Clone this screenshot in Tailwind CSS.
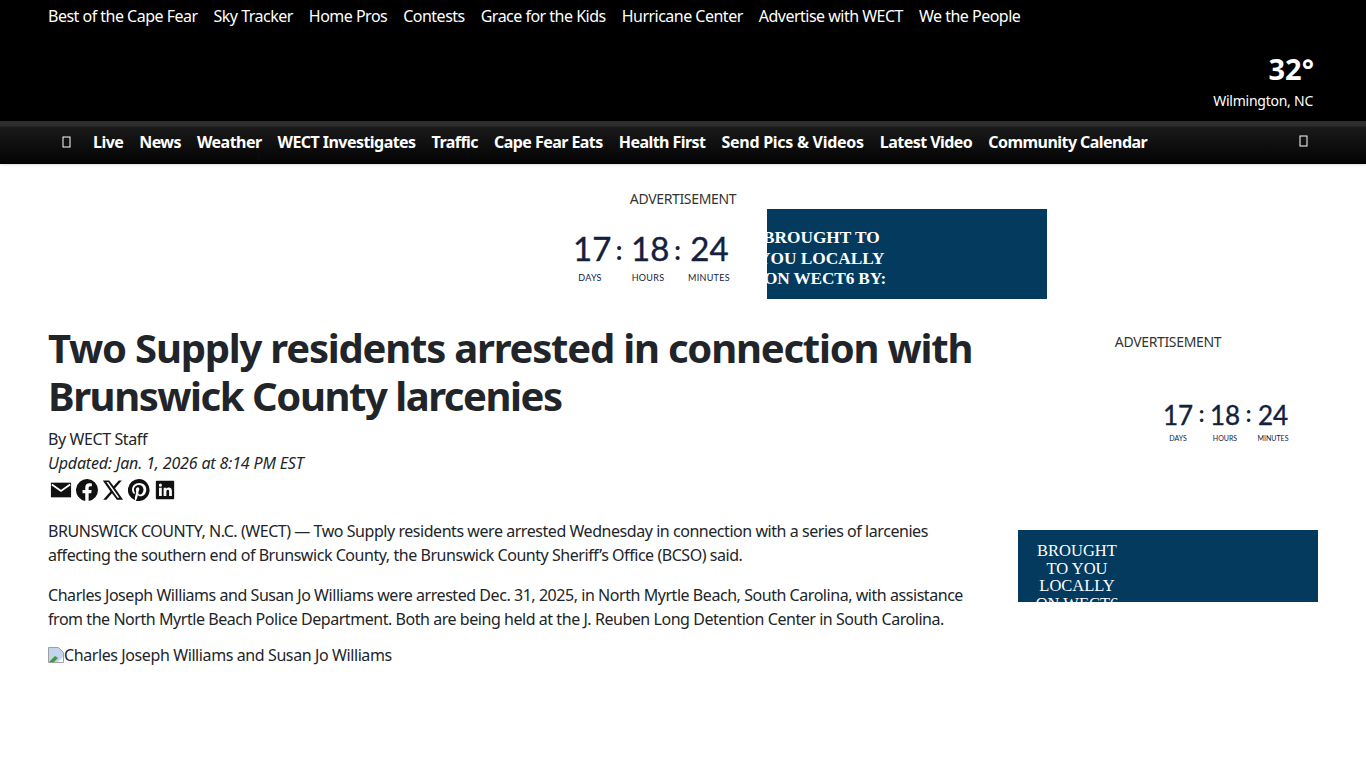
<!DOCTYPE html>
<html lang="en">
<head>
<meta charset="utf-8">
<title>Two Supply residents arrested in connection with Brunswick County larcenies</title>
<script src="https://cdn.jsdelivr.net/npm/@tailwindcss/browser@4"></script>
</head>
<body class="bg-white text-[#212529] font-['Noto_Sans',sans-serif] overflow-hidden h-[768px]">

  <!-- top bar -->
  <header class="bg-black h-[121px] px-[48px] text-white flex flex-col">
    <nav class="flex gap-[16px] text-[16px] leading-[24px] pt-[4px] tracking-[-0.51px]">
      <a>Best of the Cape Fear</a>
      <a>Sky Tracker</a>
      <a>Home Pros</a>
      <a>Contests</a>
      <a>Grace for the Kids</a>
      <a>Hurricane Center</a>
      <a>Advertise with WECT</a>
      <a>We the People</a>
    </nav>
    <div class="mt-[20px] text-right">
      <div class="text-[29px] leading-[42px] font-bold pr-[4px]">32°</div>
      <div class="text-[14px] leading-[21px] pr-[5px] tracking-[-0.25px]">Wilmington, NC</div>
    </div>
  </header>

  <!-- main nav -->
  <nav class="h-[43px] bg-[linear-gradient(#2e2e2e_0,#2e2e2e_5px,#1a1a1a_6px,#030303_100%)] text-white flex items-center pl-[62px] pr-[58px] pb-[2px] text-[16px] font-bold tracking-[-0.55px] shadow-sm">
    <svg class="w-[9px] h-[12px] mr-[22px]" viewBox="0 0 9 12"><rect x="1" y="1" width="7" height="10" fill="none" stroke="white" stroke-width="1"/></svg>
    <div class="flex gap-[16px]">
      <a>Live</a>
      <a>News</a>
      <a>Weather</a>
      <a>WECT Investigates</a>
      <a>Traffic</a>
      <a>Cape Fear Eats</a>
      <a>Health First</a>
      <a class="tracking-[-0.27px]">Send Pics &amp; Videos</a>
      <a>Latest Video</a>
      <a>Community Calendar</a>
    </div>
    <svg class="w-[9px] h-[12px] ml-auto mb-[2px]" viewBox="0 0 9 12"><rect x="1" y="1" width="7" height="10" fill="none" stroke="white" stroke-width="1"/></svg>
  </nav>

  <!-- leaderboard ad -->
  <section class="flex flex-col items-center pt-[24px] h-[155px]">
    <div class="text-[14px] leading-[21px] tracking-[-0.35px] text-[#333]">ADVERTISEMENT</div>
    <div class="flex justify-end w-[728px] h-[90px]">
      <div class="w-[200px] shrink-0 text-[#14213d] font-['Lato',sans-serif]">
        <div class="flex items-start pt-[19px]">
          <div class="w-[34px] text-center text-[33px] leading-[40px] [-webkit-text-stroke:0.4px_#14213d]">17</div>
          <div class="w-[24px] text-center text-[26px] leading-[44px] font-bold">:</div>
          <div class="w-[34px] text-center text-[33px] leading-[40px] [-webkit-text-stroke:0.4px_#14213d]">18</div>
          <div class="w-[25px] text-center text-[26px] leading-[44px] font-bold">:</div>
          <div class="w-[39px] text-center text-[33px] leading-[40px] [-webkit-text-stroke:0.4px_#14213d]">24</div>
        </div>
        <div class="flex text-[9px] leading-[12px] tracking-[0.3px]">
          <div class="w-[34px] text-center">DAYS</div>
          <div class="w-[24px]"></div>
          <div class="w-[34px] text-center">HOURS</div>
          <div class="w-[25px]"></div>
          <div class="w-[39px] -ml-[2px] text-center whitespace-nowrap">MINUTES</div>
        </div>
      </div>
      <div class="w-[280px] h-[90px] bg-[#033a5e] overflow-hidden shrink-0 ml-[-6px] text-white font-['Liberation_Serif',serif] font-bold text-[17.300px] leading-[20.500px] pt-[19px] whitespace-nowrap">
        <div class="-ml-[4px]">BROUGHT TO</div>
        <div class="-ml-[9px]">YOU LOCALLY</div>
        <div class="-ml-[3px] tracking-[-0.15px]">ON WECT6 BY:</div>
      </div>
    </div>
  </section>

  <!-- article -->
  <main class="flex pl-[48px] pr-[48px]">
    <article class="w-[930px] shrink-0">
      <h1 class="text-[40px] leading-[48px] font-bold pt-[5px] tracking-[-1.210px]">Two Supply residents arrested in connection with <span class="tracking-[-1.450px]">Brunswick County larcenies</span></h1>
      <div class="text-[16px] leading-[24px] mt-[7px] tracking-[-0.4px]">By WECT Staff</div>
      <div class="text-[16px] leading-[24px] italic tracking-[-0.15px]">Updated: Jan. 1, 2026 at 8:14 PM EST</div>
      <div class="flex gap-[4px] items-center mt-[3px] ml-[2px] h-[24px]">
        <svg class="w-[22px] h-[22px]" viewBox="0 0 24 24"><path fill="#111" d="M1 4h22v16H1z"/><path fill="none" stroke="#fff" stroke-width="2" d="M2 6l10 7 10-7"/></svg>
        <svg class="w-[22px] h-[22px]" viewBox="0 0 24 24"><path fill="#111" d="M24 12a12 12 0 1 0-13.900 11.900v-8.400H7.100V12h3V9.400c0-3 1.800-4.700 4.500-4.700 1.300 0 2.700.2 2.700.2v3h-1.500c-1.500 0-2 .9-2 1.900V12h3.300l-.5 3.500h-2.800v8.400A12 12 0 0 0 24 12z"/></svg>
        <svg class="w-[22px] h-[22px]" viewBox="0 0 24 24"><path fill="#111" d="M18.200 1.500h3.400l-7.400 8.500L23 22.500h-6.800l-5.300-7-6.100 7H1.300l7.900-9L.9 1.500h7l4.800 6.400zm-1.200 19h1.900L6.800 3.400H4.800z"/></svg>
        <svg class="w-[22px] h-[22px]" viewBox="0 0 24 24"><path fill="#111" d="M12 0a12 12 0 0 0-4.400 23.200c-.1-1-.2-2.400 0-3.400l1.400-6s-.4-.7-.4-1.800c0-1.700 1-2.900 2.200-2.900 1 0 1.500.8 1.500 1.700 0 1-.7 2.600-1 4-.3 1.200.6 2.200 1.800 2.200 2.100 0 3.800-2.300 3.800-5.500 0-2.900-2.100-4.900-5-4.900-3.400 0-5.400 2.600-5.400 5.200 0 1 .4 2.100.9 2.700.1.100.1.200.1.300l-.3 1.400c-.1.200-.2.300-.4.200-1.500-.7-2.400-2.900-2.400-4.700 0-3.800 2.800-7.300 8-7.300 4.200 0 7.500 3 7.500 7 0 4.200-2.600 7.500-6.300 7.500-1.200 0-2.400-.6-2.800-1.400l-.8 2.900c-.3 1-1 2.400-1.500 3.200A12 12 0 1 0 12 0z"/></svg>
        <svg class="w-[22px] h-[22px]" viewBox="0 0 24 24"><path fill="#111" fill-rule="evenodd" d="M3 2h18a1 1 0 0 1 1 1v18a1 1 0 0 1-1 1H3a1 1 0 0 1-1-1V3a1 1 0 0 1 1-1zm2.500 7.500v9h3v-9zM7 5a1.700 1.700 0 1 0 0 3.400A1.700 1.700 0 0 0 7 5zm3.500 4.500v9h3v-4.700c0-1.300.5-2.100 1.600-2.100s1.400.8 1.400 2.100v4.700h3v-5.400c0-2.600-1.400-3.800-3.300-3.800-1.400 0-2.200.7-2.700 1.400V9.500z"/></svg>
      </div>
      <p class="text-[16px] leading-[24px] mt-[17px] tracking-[-0.45px]">BRUNSWICK COUNTY, N.C. (WECT) — Two Supply residents were arrested Wednesday in connection with a series of larcenies affecting the southern end of Brunswick County, the Brunswick County Sheriff’s Office (BCSO) said.</p>
      <p class="text-[16px] leading-[24px] mt-[16px] tracking-[-0.45px]">Charles Joseph Williams and Susan Jo Williams were arrested Dec. 31, 2025, in North Myrtle Beach, South Carolina, with assistance from the North Myrtle Beach Police Department. Both are being held at the J. Reuben Long Detention Center in South Carolina.</p>
      <div class="flex items-center text-[16px] leading-[24px] mt-[12px] tracking-[-0.4px]">
        <svg class="w-[16px] h-[16px] shrink-0" viewBox="0 0 16 16"><path fill="#c3d4ee" stroke="#a0a0a0" d="M.5.500h10l5 5v10H.500z"/><path fill="#3c9a3c" d="M1 15l6-6 3 2-4 4z"/><path fill="#fff" d="M10 15l5-5v5z"/></svg>
        <span>Charles Joseph Williams and Susan Jo Williams</span>
      </div>
    </article>

    <!-- sidebar ad -->
    <aside class="w-[300px] ml-auto flex flex-col">
      <div class="text-[14px] leading-[21px] text-center tracking-[-0.35px] mt-[12px] text-[#333]">ADVERTISEMENT</div>
      <div class="ml-[145px] mt-[46px] w-[130px] text-[#14213d] font-['Lato',sans-serif]">
        <div class="flex">
          <div class="w-[30px] text-center text-[26px] leading-[34px] [-webkit-text-stroke:0.4px_#14213d]">17</div>
          <div class="w-[17px] text-center text-[22px] leading-[32px] font-bold">:</div>
          <div class="w-[30px] text-center text-[26px] leading-[34px] [-webkit-text-stroke:0.4px_#14213d]">18</div>
          <div class="w-[17px] text-center text-[22px] leading-[32px] font-bold">:</div>
          <div class="w-[32px] text-center text-[26px] leading-[34px] [-webkit-text-stroke:0.4px_#14213d]">24</div>
        </div>
        <div class="flex text-[7px] leading-[10px] mt-[1px]">
          <div class="w-[30px] text-center">DAYS</div>
          <div class="w-[17px]"></div>
          <div class="w-[30px] text-center">HOURS</div>
          <div class="w-[17px]"></div>
          <div class="w-[32px] text-center whitespace-nowrap">MINUTES</div>
        </div>
      </div>
      <div class="mt-[87px] h-[72px] bg-[#033a5e] overflow-hidden text-white font-['Liberation_Serif',serif] text-[16.500px] leading-[17.500px] pt-[12px]">
        <div class="ml-[14px] w-[90px] text-center">BROUGHT<br>TO YOU<br>LOCALLY<br>ON WECT6</div>
      </div>
    </aside>
  </main>
</body>
</html>
